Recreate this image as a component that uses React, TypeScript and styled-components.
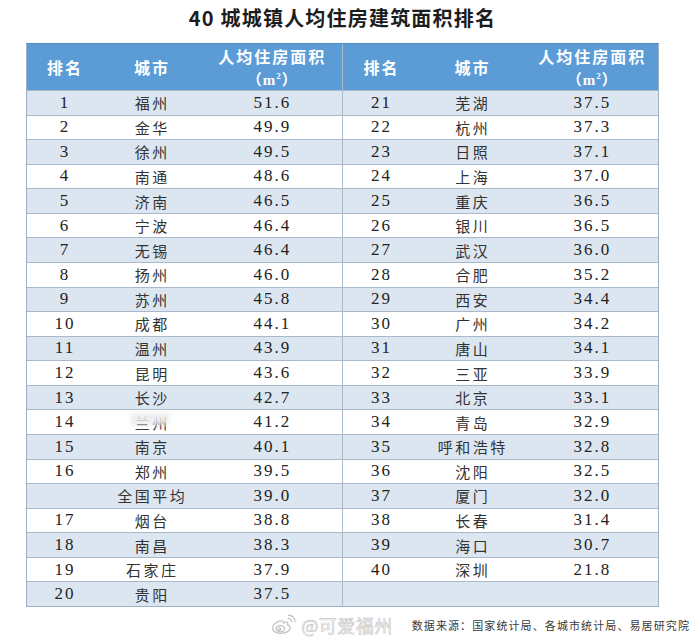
import React from 'react';
import styled, { createGlobalStyle } from 'styled-components';

const Global = createGlobalStyle`
  html, body { margin: 0; padding: 0; background: #ffffff; }
  body { font-family: "Noto Sans CJK SC", sans-serif; }
`;

const Page = styled.div`
  width: 697px;
  height: 640px;
  box-sizing: border-box;
  padding-left: 26px;
  display: flex;
  flex-direction: column;
  overflow: hidden;
  background: #fff;
`;

const Title = styled.h1`
  margin: 0;
  width: 633px;
  height: 43px;
  padding-bottom: 8px;
  box-sizing: border-box;
  display: flex;
  align-items: center;
  justify-content: center;
  font: 700 20px "Noto Sans CJK SC", sans-serif;
  letter-spacing: 1.2px;
  color: #1c1c1c;
`;

const Table = styled.div`
  width: 633px;
  height: 564px;
  box-sizing: border-box;
  display: flex;
  border: 1px solid #9fb1c4;
  border-top-color: #4f8cc6;
`;

const Half = styled.div<{ $divider?: boolean; $width: number }>`
  width: ${(p) => p.$width}px;
  display: flex;
  flex-direction: column;
  border-left: ${(p) => (p.$divider ? '1px solid #a9bacb' : 'none')};
`;

const HeaderRow = styled.div<{ $cols: string }>`
  height: 46px;
  flex: none;
  display: grid;
  grid-template-columns: ${(p) => p.$cols};
  align-items: center;
  background: #5c9cd6;
  color: #ffffff;
`;

const HeadCell = styled.div`
  text-align: center;
  font: 700 16px "Noto Sans CJK SC", sans-serif;
  letter-spacing: 2px;
  padding-left: 2px;
  line-height: 22px;
`;

const Unit = styled.span`
  font: 700 15px "Liberation Serif", "Noto Sans CJK SC", serif;
  letter-spacing: 1px;
  sup { font-size: 9px; line-height: 0; }
`;

const Body = styled.div`
  flex: 1;
  display: grid;
  grid-template-rows: repeat(21, 1fr);
`;

const Row = styled.div<{ $cols: string; $alt: boolean }>`
  display: grid;
  grid-template-columns: ${(p) => p.$cols};
  align-items: center;
  border-top: 1px solid #a9b9cb;
  background: ${(p) => (p.$alt ? '#dce6f1' : '#ffffff')};
  color: #222222;
`;

const NumCell = styled.div`
  position: relative;
  text-align: center;
  font: 400 17px "Liberation Serif", serif;
  letter-spacing: 2px;
  padding-left: 2px;
`;

const CityCell = styled.div`
  position: relative;
  text-align: center;
  font: 400 15px "Noto Sans CJK SC", sans-serif;
  letter-spacing: 2.5px;
  padding-left: 2.5px;
  color: #333333;
`;

const Smudge = styled.span`
  position: absolute;
  left: 30px;
  top: 1px;
  width: 38px;
  height: 12px;
  background: rgba(235, 235, 235, 0.85);
  filter: blur(2px);
`;

const Footer = styled.div`
  flex: 1;
  display: flex;
  align-items: center;
  justify-content: flex-end;
  padding-right: 7px;
  padding-top: 2px;
  gap: 19px;
`;

const Mark = styled.div`
  display: flex;
  align-items: center;
  gap: 5px;
`;

const MarkText = styled.span`
  font: 400 18px "Noto Sans CJK SC", sans-serif;
  color: #fafafa;
  -webkit-text-stroke: 0.6px #c6c6c6;
  letter-spacing: 0.5px;
`;

const Source = styled.span`
  font: 400 11px "Noto Sans CJK SC", sans-serif;
  letter-spacing: 1.1px;
  color: #3a3a3a;
`;

const LEFT_COLS = '74px 100px 1fr';
const RIGHT_COLS = '76px 106px 1fr';

type Item = { rank: string; city: string; value: string };

const left: Item[] = [
  { rank: '1', city: '福州', value: '51.6' },
  { rank: '2', city: '金华', value: '49.9' },
  { rank: '3', city: '徐州', value: '49.5' },
  { rank: '4', city: '南通', value: '48.6' },
  { rank: '5', city: '济南', value: '46.5' },
  { rank: '6', city: '宁波', value: '46.4' },
  { rank: '7', city: '无锡', value: '46.4' },
  { rank: '8', city: '扬州', value: '46.0' },
  { rank: '9', city: '苏州', value: '45.8' },
  { rank: '10', city: '成都', value: '44.1' },
  { rank: '11', city: '温州', value: '43.9' },
  { rank: '12', city: '昆明', value: '43.6' },
  { rank: '13', city: '长沙', value: '42.7' },
  { rank: '14', city: '兰州', value: '41.2' },
  { rank: '15', city: '南京', value: '40.1' },
  { rank: '16', city: '郑州', value: '39.5' },
  { rank: '', city: '全国平均', value: '39.0' },
  { rank: '17', city: '烟台', value: '38.8' },
  { rank: '18', city: '南昌', value: '38.3' },
  { rank: '19', city: '石家庄', value: '37.9' },
  { rank: '20', city: '贵阳', value: '37.5' },
];

const right: Item[] = [
  { rank: '21', city: '芜湖', value: '37.5' },
  { rank: '22', city: '杭州', value: '37.3' },
  { rank: '23', city: '日照', value: '37.1' },
  { rank: '24', city: '上海', value: '37.0' },
  { rank: '25', city: '重庆', value: '36.5' },
  { rank: '26', city: '银川', value: '36.5' },
  { rank: '27', city: '武汉', value: '36.0' },
  { rank: '28', city: '合肥', value: '35.2' },
  { rank: '29', city: '西安', value: '34.4' },
  { rank: '30', city: '广州', value: '34.2' },
  { rank: '31', city: '唐山', value: '34.1' },
  { rank: '32', city: '三亚', value: '33.9' },
  { rank: '33', city: '北京', value: '33.1' },
  { rank: '34', city: '青岛', value: '32.9' },
  { rank: '35', city: '呼和浩特', value: '32.8' },
  { rank: '36', city: '沈阳', value: '32.5' },
  { rank: '37', city: '厦门', value: '32.0' },
  { rank: '38', city: '长春', value: '31.4' },
  { rank: '39', city: '海口', value: '30.7' },
  { rank: '40', city: '深圳', value: '21.8' },
  { rank: '', city: '', value: '' },
];

const Header: React.FC<{ cols: string }> = ({ cols }) => (
  <HeaderRow $cols={cols}>
    <HeadCell>排名</HeadCell>
    <HeadCell>城市</HeadCell>
    <HeadCell>
      人均住房面积
      <br />
      <Unit>
        （m<sup>2</sup>）
      </Unit>
    </HeadCell>
  </HeaderRow>
);

const WeiboLogo = () => (
  <svg width="25" height="21" viewBox="0 0 24 20" fill="none" stroke="#c2c2c2" strokeWidth="1.2">
    <path d="M9.5 6.5c-4 0.5-8 3.5-8 7 0 3 3.6 5 8 5 5 0 9-2.6 9-5.4 0-1.6-1.4-2.4-2.6-2.7 0.6-1.4 0.4-2.6-1.4-2.6-1 0-2 0.4-2.6 0.7 0.4-1.5-0.4-2.4-2.4-2z" />
    <ellipse cx="9" cy="14" rx="4.2" ry="3" />
    <circle cx="8.2" cy="14.4" r="1.2" />
    <path d="M16 4.2c2.2-0.4 4.2 1.4 3.8 3.8" />
    <path d="M16.2 1.2c4-0.6 7.4 2.8 6.6 6.8" />
  </svg>
);

const HalfTable: React.FC<{ items: Item[]; cols: string; divider?: boolean; width: number }> = ({
  items,
  cols,
  divider,
  width,
}) => (
  <Half $divider={divider} $width={width}>
    <Header cols={cols} />
    <Body>
      {items.map((it, i) => (
        <Row key={i} $cols={cols} $alt={i % 2 === 0}>
          <NumCell>{it.rank}</NumCell>
          <CityCell>
            {it.city}
            {it.city === '兰州' && <Smudge />}
          </CityCell>
          <NumCell>{it.value}</NumCell>
        </Row>
      ))}
    </Body>
  </Half>
);

export default function App() {
  return (
    <>
      <Global />
      <Page>
        <Title>40 城城镇人均住房建筑面积排名</Title>
        <Table>
          <HalfTable items={left} cols={LEFT_COLS} width={315} />
          <HalfTable items={right} cols={RIGHT_COLS} divider width={316} />
        </Table>
        <Footer>
          <Mark>
            <WeiboLogo />
            <MarkText>@可爱福州</MarkText>
          </Mark>
          <Source>数据来源：国家统计局、各城市统计局、易居研究院</Source>
        </Footer>
      </Page>
    </>
  );
}
